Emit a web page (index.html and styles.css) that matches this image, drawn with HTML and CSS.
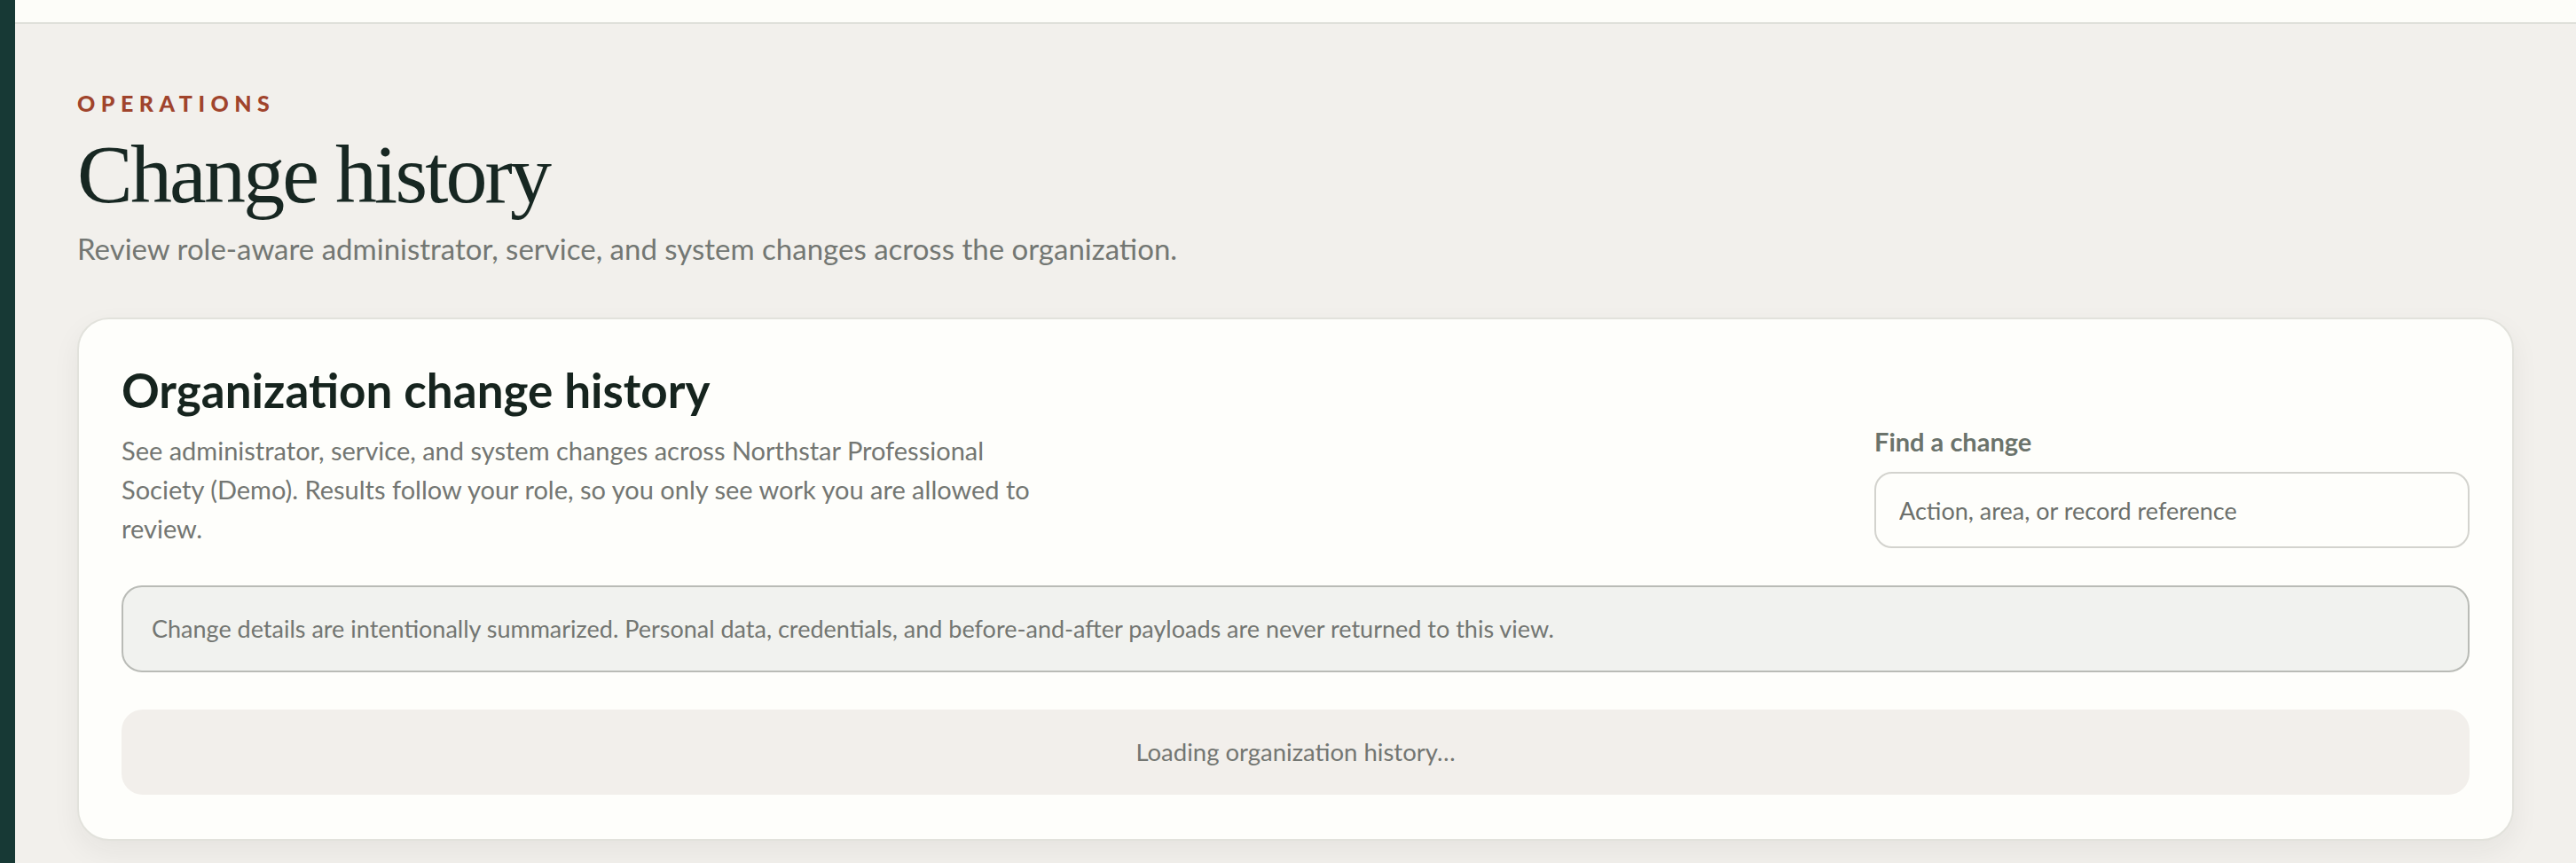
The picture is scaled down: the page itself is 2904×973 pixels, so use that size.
FILE: index.html
```html
<!DOCTYPE html>
<html>
<head>
    <title>Change history</title>
    <link rel="stylesheet" href="styles.css">
</head>
<body>
<div class="shell">
    <aside class="rail"></aside>

    <div class="main">
        <header class="topbar"></header>

        <section class="page">
            <!-- Page heading -->
            <p class="eyebrow">Operations</p>
            <h1 class="title">Change history</h1>
            <p class="lede">Review role-aware administrator, service, and system changes across the organization.</p>

            <div class="card">
                <div class="card-head">
                    <div class="card-intro">
                        <h2>Organization change history</h2>
                        <p>See administrator, service, and system changes across Northstar Professional Society (Demo). Results follow your role, so you only see work you are allowed to review.</p>
                    </div>

                    <div class="search">
                        <label for="findChange">Find a change</label>
                        <input type="text" id="findChange" placeholder="Action, area, or record reference">
                    </div>
                </div>

                <div class="notice">Change details are intentionally summarized. Personal data, credentials, and before-and-after payloads are never returned to this view.</div>

                <div class="loading">Loading organization history…</div>
            </div>
        </section>
    </div>
</div>
</body>
</html>
```

FILE: styles.css
```css
body {
    margin: 0;
    background: #f2f0ec;
    font-family: Lato, "Noto Sans", sans-serif;
    color: #17261f;
}

.shell {
    display: flex;
    min-height: 100vh;
}

/* Dark strip on the far left */
.rail {
    width: 17px;
    flex-shrink: 0;
    background: #173935;
}

.main {
    flex: 1;
}

.topbar {
    height: 25px;
    background: #fdfdf9;
    border-bottom: 2px solid #dfe0da;
}

.page {
    padding: 74px 70px 40px 70px;
}

.eyebrow {
    margin: 0;
    font-size: 25px;
    line-height: 30px;
    font-weight: 900;
    letter-spacing: 0.26em;
    text-transform: uppercase;
    color: #a0442c;
}

.title {
    margin: 13px 0 0 0;
    font-family: "Liberation Serif", "Times New Roman", serif;
    font-weight: 400;
    font-size: 94px;
    line-height: 104px;
    letter-spacing: -0.03em;
    color: #172722;
}

.lede {
    margin: 12px 0 0 0;
    font-size: 33px;
    line-height: 40px;
    color: #737773;
}

/* Main card */
.card {
    margin-top: 58px;
    background: #fefefb;
    border: 2px solid #e2e2dc;
    border-radius: 36px;
    padding: 52px 48px 50px 48px;
    box-shadow: 0 12px 32px rgba(30, 40, 35, 0.06);
    display: flex;
    flex-direction: column;
    gap: 42px;
}

.card-head {
    display: flex;
    justify-content: space-between;
    align-items: flex-end;
}

.card-intro {
    max-width: 1060px;
}

.card-intro h2 {
    margin: 0;
    font-size: 53px;
    line-height: 56px;
    font-weight: 700;
    color: #16241e;
}

.card-intro p {
    margin: 18px 0 0 0;
    font-size: 29px;
    line-height: 44px;
    color: #737672;
}

.search {
    width: 671px;
    display: flex;
    flex-direction: column;
    gap: 17px;
}

.search label {
    font-size: 29px;
    line-height: 34px;
    font-weight: 700;
    color: #6b736b;
}

.search input {
    box-sizing: border-box;
    height: 86px;
    padding: 0 26px;
    border: 2px solid #d3d3ce;
    border-radius: 20px;
    background: #fefefb;
    font-family: inherit;
    font-size: 27px;
    color: #17261f;
}

.search input::placeholder {
    color: #6c706c;
}

.notice {
    padding: 26px 32px;
    border: 2px solid #b9bbb6;
    border-radius: 23px;
    background: #f1f2ef;
    font-size: 27px;
    line-height: 42px;
    color: #737672;
}

.loading {
    padding: 28px 32px;
    border-radius: 24px;
    background: #f2efeb;
    text-align: center;
    font-size: 27.5px;
    line-height: 40px;
    color: #737672;
}
```
